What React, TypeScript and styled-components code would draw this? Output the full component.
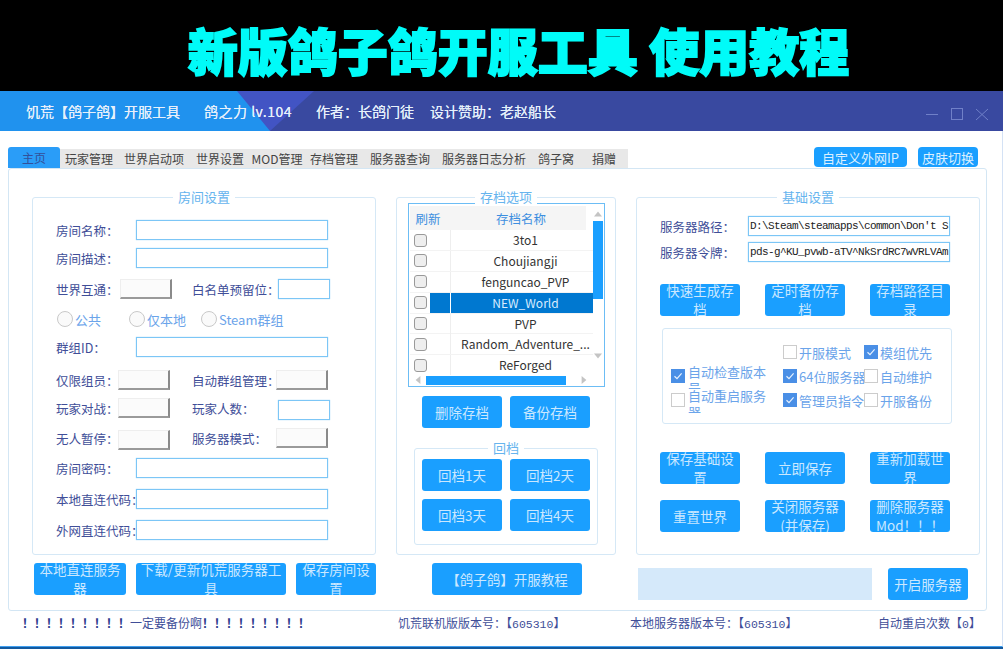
import React from "react"
import styled, { createGlobalStyle } from "styled-components"

const GlobalStyle = createGlobalStyle`
  html, body {
    margin: 0;
    padding: 0;
    background: #fff;
    font-family: "Noto Sans CJK SC", "Liberation Sans", sans-serif;
  }
  * {
    box-sizing: border-box;
  }
`

const Page = styled.div`
  width: 1003px;
  height: 649px;
  overflow: hidden;
  display: flex;
  flex-direction: column;
  /* keeps text antialiasing grey, the reference has no colour fringes */
  opacity: 0.999;
`
const Banner = styled.div`
  height: 91px;
  flex: none;
  background: #000;
  display: flex;
  align-items: center;
  justify-content: center;
`
const BannerTitle = styled.h1`
  margin: 0 0 -7px 34px;
  font-size: 50px;
  line-height: 60px;
  font-weight: 900;
  color: #00fbf8;
  -webkit-text-stroke: 1.8px #00fbf8;
  white-space: pre;
`
const Window = styled.div`
  flex: 1;
  display: flex;
  flex-direction: column;
  background: #fff;
  border-bottom: 2px solid #12599f;
`
const TitleBar = styled.div`
  height: 40px;
  flex: none;
  position: relative;
  background: #3949a0;
  display: flex;
  align-items: center;
  padding-left: 26px;
  color: #e6f0fb;
  font-size: 14px;
  text-shadow: 0 0 0.6px #e6f0fb;
  overflow: hidden;
  &::before {
    content: "";
    position: absolute;
    inset: 0;
    background: #4254c4;
    clip-path: polygon(0 0, 314px 0, 270px 100%, 0 100%);
  }
  &::after {
    content: "";
    position: absolute;
    inset: 0;
    background: #2092ee;
    clip-path: polygon(0 0, 237px 0, 270px 100%, 0 100%);
  }
`
const TitleText = styled.span<{ $gap: number; $spread?: number }>`
  position: relative;
  z-index: 1;
  margin-right: ${({ $gap }) => $gap}px;
  letter-spacing: ${({ $spread }) => $spread ?? 0}px;
  white-space: pre;
`
const WinControls = styled.div`
  position: absolute;
  z-index: 1;
  right: 15px;
  top: 16px;
  display: flex;
`
const WindowBody = styled.div`
  flex: 1;
  display: flex;
  flex-direction: column;
  border-right: 1px solid #d4e2f5;
  border-bottom: 1px solid #3f9ff0;
`
const Tabs = styled.div`
  display: flex;
  align-items: flex-end;
  height: 21px;
  margin: 16px 0 0 8px;
  flex: none;
`
const Tab = styled.div<{ $w: number; $active?: boolean }>`
  width: ${({ $w }) => $w}px;
  height: ${({ $active }) => ($active ? 21 : 19)}px;
  display: flex;
  align-items: center;
  justify-content: center;
  font-size: 12px;
  white-space: nowrap;
  color: ${({ $active }) => ($active ? "#33509a" : "#444")};
  background: ${({ $active }) => ($active ? "#2a9df8" : "#e8e8e8")};
  border-radius: ${({ $active }) => ($active ? "3px 3px 0 0" : "0")};
`
const TabAction = styled.div<{ $w: number; $left: number }>`
  width: ${({ $w }) => $w}px;
  height: 20px;
  margin-left: ${({ $left }) => $left}px;
  align-self: flex-start;
  display: flex;
  align-items: center;
  justify-content: center;
  font-size: 13px;
  white-space: nowrap;
  color: #dcf0ff;
  background: #1a9fff;
  border-radius: 4px;
`
const Panel = styled.div`
  margin-left: 8px;
  width: 979px;
  height: 443px;
  flex: none;
  border: 1px solid #d3e6f4;
  border-radius: 3px;
  padding: 28px 0 0 23px;
  display: grid;
  grid-template-columns: 344px 220px 344px;
  grid-template-rows: 358px auto;
  column-gap: 20px;
  row-gap: 8px;
`
const Group = styled.div`
  position: relative;
  border: 1px solid #d5e8f6;
  border-radius: 3px;
`
const Legend = styled.div`
  position: absolute;
  top: -10px;
  left: 50%;
  transform: translateX(-50%);
  padding: 0 5px;
  background: #fff;
  font-size: 13px;
  line-height: 18px;
  white-space: nowrap;
  color: #66b4ee;
`
const RoomForm = styled.div`
  padding: 22px 0 0 23px;
`
const Row = styled.div<{ $top: number }>`
  display: flex;
  align-items: center;
  height: 20px;
  margin-top: ${({ $top }) => $top}px;
`
const Label = styled.div<{ $w: number; $left?: number }>`
  width: ${({ $w }) => $w}px;
  margin-left: ${({ $left }) => $left ?? 0}px;
  flex: none;
  font-size: 12.5px;
  white-space: nowrap;
  color: #404e98;
`
const Input = styled.div<{ $w: number; $drop?: number }>`
  width: ${({ $w }) => $w}px;
  height: 20px;
  margin-top: ${({ $drop }) => $drop ?? 0}px;
  flex: none;
  background: #fff;
  border: 1px solid #7cc6f6;
  box-shadow: 0 0 1px #8fd0fa;
  font-family: "Liberation Mono", monospace;
  font-size: 11px;
  letter-spacing: -0.6px;
  line-height: 18px;
  padding-left: 1px;
  color: #222;
  overflow: hidden;
  white-space: pre;
`
const Select = styled.div<{ $drop?: number }>`
  width: 52px;
  height: 20px;
  margin-top: ${({ $drop }) => $drop ?? 0}px;
  flex: none;
  background: #fbfbfb;
  border-top: 1px solid #eee;
  border-left: 1px solid #eee;
  border-right: 2px solid #8a8a8a;
  border-bottom: 2px solid #9a9a9a;
`
const RadioRow = styled.div`
  display: grid;
  grid-template-columns: 72px 72px auto;
  height: 20px;
  margin: 10px 0 0 1px;
`
const Radio = styled.div`
  display: flex;
  align-items: center;
  gap: 2px;
  font-size: 13px;
  color: #6ba4ea;
  &::before {
    content: "";
    width: 14px;
    height: 14px;
    border: 1px solid #c9c9c9;
    border-radius: 50%;
    background: #fafafa;
  }
`
const ButtonRow = styled.div<{ $left: number; $top?: number; $gap?: number }>`
  display: flex;
  gap: ${({ $gap }) => $gap ?? 10}px;
  margin-left: ${({ $left }) => $left}px;
  margin-top: ${({ $top }) => $top ?? 0}px;
`
const Button = styled.div<{ $w: number }>`
  width: ${({ $w }) => $w}px;
  height: 32px;
  flex: none;
  overflow: hidden;
  display: flex;
  align-items: center;
  justify-content: center;
  text-align: center;
  font-size: 13.5px;
  line-height: 19px;
  color: #cbe8ff;
  background: #1a9fff;
  border-radius: 3px;
`
const SaveList = styled.div`
  width: 197px;
  height: 184px;
  margin: 5px 0 0 11px;
  border: 1px solid #6cbdf5;
  display: grid;
  grid-template-columns: 1fr 11px;
  grid-template-rows: 1fr 11px;
  overflow: hidden;
`
const ListBody = styled.div`
  padding: 2px 0 0 1px;
  overflow: hidden;
`
const ListHead = styled.div`
  height: 24px;
  margin-right: 7px;
  display: grid;
  grid-template-columns: 36px 150px;
  align-items: center;
  background: #f5f5f5;
  font-size: 12.5px;
  color: #3d8fe0;
  text-align: center;
`
const ListRow = styled.div<{ $selected?: boolean }>`
  height: 20.9px;
  width: 190px;
  display: grid;
  grid-template-columns: 40px 150px;
  align-items: center;
  border-bottom: 1px solid #f3f3f3;
  font-size: 12px;
  color: ${({ $selected }) => ($selected ? "#d8ecff" : "#333")};
  background: ${({ $selected }) =>
    $selected ? "linear-gradient(to right, transparent 20px, #0078d0 20px)" : "none"};
`
const RowCheck = styled.div`
  width: 13px;
  height: 13px;
  margin-left: 4px;
  border: 1px solid #999;
  border-radius: 3px;
  background: #eee;
`
const RowName = styled.div<{ $selected?: boolean }>`
  height: 100%;
  border-left: 1px solid ${({ $selected }) => ($selected ? "#fff" : "#eee")};
  text-align: center;
  line-height: 20px;
  white-space: nowrap;
`
const VTrack = styled.div`
  padding-top: 17px;
  position: relative;
  display: flex;
  flex-direction: column;
  background: #fff;
  z-index: 1;
`
const VThumb = styled.div`
  width: 10px;
  height: 78px;
  background: #1a9fff;
`
const HTrack = styled.div`
  display: flex;
  align-items: center;
  padding-left: 17px;
  position: relative;
  grid-column: 1 / 3;
`
const HThumb = styled.div`
  width: 140px;
  height: 9px;
  background: #1a9fff;
`
const Arrow = styled.i<{ $dir: "up" | "down" | "left" | "right" }>`
  position: absolute;
  width: 8px;
  height: 8px;
  background: #c4c4c4;
  ${({ $dir }) =>
    $dir === "up"
      ? "top: 6px; left: 1px; clip-path: polygon(50% 20%, 100% 80%, 0 80%);"
      : $dir === "down"
        ? "bottom: 15px; left: 1px; clip-path: polygon(50% 80%, 100% 20%, 0 20%);"
        : $dir === "left"
          ? "left: 5px; top: 1px; clip-path: polygon(20% 50%, 80% 0, 80% 100%);"
          : "right: 16px; top: 1px; clip-path: polygon(80% 50%, 20% 0, 20% 100%);"}
`
const RollbackGroup = styled(Group)`
  width: 184px;
  height: 97px;
  margin: 20px 0 0 17px;
  padding: 10px 0 0 7px;
  display: grid;
  grid-template-columns: 80px 80px;
  grid-auto-rows: 32px;
  gap: 8px;
`
const BaseForm = styled.div`
  padding: 18px 0 0 23px;
`
const BaseRow = styled.div<{ $top: number }>`
  display: flex;
  align-items: center;
  margin-top: ${({ $top }) => $top}px;
  height: 20px;
`
const SplitRow = styled.div<{ $top: number }>`
  display: flex;
  justify-content: space-between;
  width: 290px;
  margin-top: ${({ $top }) => $top}px;
`
const OptionBox = styled.div`
  width: 290px;
  height: 96px;
  margin: 12px 0 0 2px;
  border: 1px solid #d5e8f6;
  border-radius: 3px;
  display: grid;
  grid-template-columns: 120px 1fr;
`
const WrappedOptions = styled.div`
  padding: 35px 0 0 8px;
`
const WrappedOption = styled.div`
  height: 24px;
  display: flex;
  align-items: center;
  gap: 3px;
`
const WrappedText = styled.div`
  width: 80px;
  height: 25px;
  align-self: flex-start;
  overflow: hidden;
  clip-path: inset(2px 0 0 0);
  font-size: 13px;
  line-height: 16px;
  color: #6ba4ea;
`
const OptionGrid = styled.div`
  padding-top: 11px;
  display: grid;
  grid-template-columns: 81px 1fr;
  grid-auto-rows: 24px;
`
const Option = styled.div`
  display: flex;
  align-items: center;
  gap: 2px;
  font-size: 13px;
  white-space: nowrap;
  color: #6ba4ea;
`
const Check = styled.span<{ $on?: boolean }>`
  width: 14px;
  height: 14px;
  flex: none;
  display: flex;
  align-items: center;
  justify-content: center;
  border: 1px solid ${({ $on }) => ($on ? "#4a8fe6" : "#ccc")};
  background: ${({ $on }) => ($on ? "#4a8fe6" : "#fff")};
`
const ProgressBar = styled.div`
  width: 234px;
  height: 32px;
  background: #d5e9fa;
`
const StatusBar = styled.div`
  display: grid;
  grid-template-columns: 376px 232px 248px auto;
  padding: 3px 0 0 22px;
  font-size: 12px;
  line-height: 18px;
  color: #404e98;
  white-space: nowrap;
`
const Digits = styled.span`
  font-family: "Liberation Mono", monospace;
  font-size: 11.5px;
`
const Marks = styled.span`
  font-weight: 700;
  color: #2c3a8c;
`

const CheckBox = ({ on }: { on?: boolean }) => (
  <Check $on={on}>
    {on && (
      <svg width="10" height="10" viewBox="0 0 10 10">
        <path d="M1.5 5.2 4 7.6 8.6 2.4" fill="none" stroke="#e8f2ff" strokeWidth="1.2" />
      </svg>
    )}
  </Check>
)

const saves = ["3to1", "Choujiangji", "fenguncao_PVP", "NEW_World", "PVP", "Random_Adventure_...", "ReForged"]
const tabs: [string, number][] = [
  ["玩家管理", 58],
  ["世界启动项", 72],
  ["世界设置", 60],
  ["MOD管理", 54],
  ["存档管理", 60],
  ["服务器查询", 72],
  ["服务器日志分析", 96],
  ["鸽子窝", 48],
  ["捐赠", 48],
]

export default function App() {
  return (
    <Page>
      <GlobalStyle />
      <Banner>
        <BannerTitle>新版鸽子鸽开服工具 使用教程</BannerTitle>
      </Banner>
      <Window>
        <TitleBar>
          <TitleText $gap={24}>饥荒【鸽子鸽】开服工具</TitleText>
          <TitleText $gap={24} $spread={0.5}>鸽之力 lv.104</TitleText>
          <TitleText $gap={16}>作者：长鸽门徒</TitleText>
          <TitleText $gap={0}>设计赞助：老赵船长</TitleText>
          <WinControls>
            <svg width="62" height="14" viewBox="0 0 62 14" fill="none" stroke="#7080c8" strokeWidth="1">
              <path d="M0 7.5H12" />
              <rect x="25.5" y="1.5" width="11" height="11" />
              <path d="M50 2 62 13M62 2 50 13" />
            </svg>
          </WinControls>
        </TitleBar>
        <WindowBody>
          <Tabs>
            <Tab $w={52} $active>主页</Tab>
            {tabs.map(([name, w]) => (
              <Tab key={name} $w={w}>{name}</Tab>
            ))}
            <TabAction $w={93} $left={186}>自定义外网IP</TabAction>
            <TabAction $w={60} $left={11}>皮肤切换</TabAction>
          </Tabs>
          <Panel>
            <Group>
              <Legend>房间设置</Legend>
              <RoomForm>
                <Row $top={0}><Label $w={80}>房间名称：</Label><Input $w={192} /></Row>
                <Row $top={8}><Label $w={80}>房间描述：</Label><Input $w={192} /></Row>
                <Row $top={11}>
                  <Label $w={64}>世界互通：</Label><Select />
                  <Label $w={86} $left={20}>白名单预留位：</Label><Input $w={52} />
                </Row>
                <RadioRow>
                  <Radio>公共</Radio>
                  <Radio>仅本地</Radio>
                  <Radio>Steam群组</Radio>
                </RadioRow>
                <Row $top={8}><Label $w={80}>群组ID：</Label><Input $w={192} /></Row>
                <Row $top={13}>
                  <Label $w={62}>仅限组员：</Label><Select />
                  <Label $w={84} $left={22}>自动群组管理：</Label><Select />
                </Row>
                <Row $top={8}>
                  <Label $w={62}>玩家对战：</Label><Select />
                  <Label $w={86} $left={22}>玩家人数：</Label><Input $w={52} $drop={4} />
                </Row>
                <Row $top={10}>
                  <Label $w={62}>无人暂停：</Label><Select $drop={4} />
                  <Label $w={84} $left={22}>服务器模式：</Label><Select />
                </Row>
                <Row $top={10}><Label $w={80}>房间密码：</Label><Input $w={192} /></Row>
                <Row $top={11}><Label $w={80}>本地直连代码：</Label><Input $w={192} /></Row>
                <Row $top={11}><Label $w={80}>外网直连代码：</Label><Input $w={192} /></Row>
              </RoomForm>
            </Group>
            <Group>
              <Legend>存档选项</Legend>
              <SaveList>
                <ListBody>
                  <ListHead><span>刷新</span><span>存档名称</span></ListHead>
                  {saves.map((s) => (
                    <ListRow key={s} $selected={s === "NEW_World"}>
                      <RowCheck />
                      <RowName $selected={s === "NEW_World"}>{s}</RowName>
                    </ListRow>
                  ))}
                </ListBody>
                <VTrack>
                  <Arrow $dir="up" />
                  <VThumb />
                  <Arrow $dir="down" />
                </VTrack>
                <HTrack>
                  <Arrow $dir="left" />
                  <HThumb />
                  <Arrow $dir="right" />
                </HTrack>
              </SaveList>
              <ButtonRow $left={25} $top={9} $gap={8}>
                <Button $w={80}>删除存档</Button>
                <Button $w={80}>备份存档</Button>
              </ButtonRow>
              <RollbackGroup>
                <Legend>回档</Legend>
                <Button $w={80}>回档1天</Button>
                <Button $w={80}>回档2天</Button>
                <Button $w={80}>回档3天</Button>
                <Button $w={80}>回档4天</Button>
              </RollbackGroup>
            </Group>
            <Group>
              <Legend>基础设置</Legend>
              <BaseForm>
                <BaseRow $top={0}>
                  <Label $w={88}>服务器路径：</Label>
                  <Input $w={202}>D:\Steam\steamapps\common\Don't S</Input>
                </BaseRow>
                <BaseRow $top={6}>
                  <Label $w={88}>服务器令牌：</Label>
                  <Input $w={202}>pds-g^KU_pvwb-aTV^NkSrdRC7wVRLVAm</Input>
                </BaseRow>
                <SplitRow $top={22}>
                  <Button $w={80}>快速生成存档</Button>
                  <Button $w={80}>定时备份存档</Button>
                  <Button $w={80}>存档路径目录</Button>
                </SplitRow>
                <OptionBox>
                  <WrappedOptions>
                    <WrappedOption><CheckBox on /><WrappedText>自动检查版本号</WrappedText></WrappedOption>
                    <WrappedOption><CheckBox /><WrappedText>自动重启服务器</WrappedText></WrappedOption>
                  </WrappedOptions>
                  <OptionGrid>
                    <Option><CheckBox />开服模式</Option>
                    <Option><CheckBox on />模组优先</Option>
                    <Option><CheckBox on />64位服务器</Option>
                    <Option><CheckBox />自动维护</Option>
                    <Option><CheckBox on />管理员指令</Option>
                    <Option><CheckBox />开服备份</Option>
                  </OptionGrid>
                </OptionBox>
                <SplitRow $top={28}>
                  <Button $w={80}>保存基础设置</Button>
                  <Button $w={80}>立即保存</Button>
                  <Button $w={80}>重新加载世界</Button>
                </SplitRow>
                <SplitRow $top={16}>
                  <Button $w={80}>重置世界</Button>
                  <Button $w={80}>关闭服务器(并保存)</Button>
                  <Button $w={80}>删除服务器Mod！！！</Button>
                </SplitRow>
              </BaseForm>
            </Group>
            <ButtonRow $left={2}>
              <Button $w={92}>本地直连服务器</Button>
              <Button $w={150}>下载/更新饥荒服务器工具</Button>
              <Button $w={80}>保存房间设置</Button>
            </ButtonRow>
            <ButtonRow $left={36}>
              <Button $w={150}>【鸽子鸽】开服教程</Button>
            </ButtonRow>
            <ButtonRow $left={2} $top={5} $gap={16}>
              <ProgressBar />
              <Button $w={80}>开启服务器</Button>
            </ButtonRow>
          </Panel>
          <StatusBar>
            <span><Marks>！！！！！！！！！</Marks>一定要备份啊<Marks>！！！！！！！！！</Marks></span>
            <span>饥荒联机版版本号：【<Digits>605310</Digits>】</span>
            <span>本地服务器版本号：【<Digits>605310</Digits>】</span>
            <span>自动重启次数【<Digits>0</Digits>】</span>
          </StatusBar>
        </WindowBody>
      </Window>
    </Page>
  )
}
